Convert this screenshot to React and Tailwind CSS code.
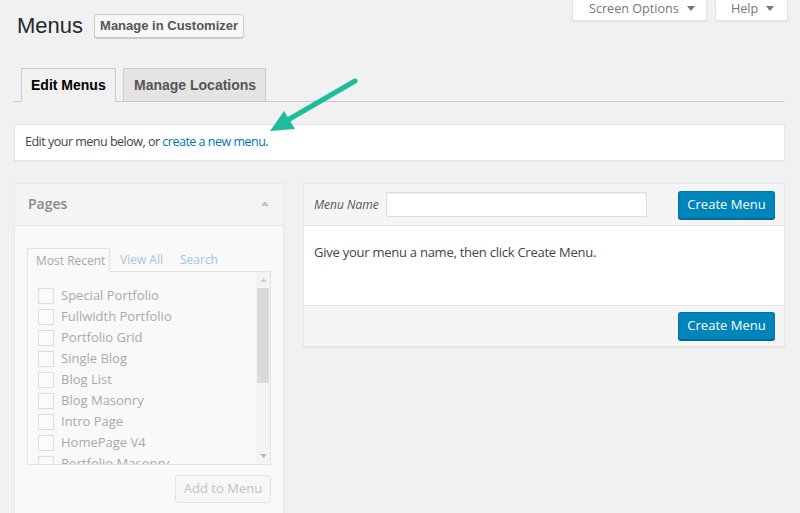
import React from "react";

const pages = [
  "Special Portfolio",
  "Fullwidth Portfolio",
  "Portfolio Grid",
  "Single Blog",
  "Blog List",
  "Blog Masonry",
  "Intro Page",
  "HomePage V4",
  "Portfolio Masonry",
];

const Caret = ({ up = false, className = "" }) => (
  <svg width="8" height="5" viewBox="0 0 8 5" className={className}>
    <polygon points={up ? "0,5 8,5 4,0" : "0,0 8,0 4,5"} fill="currentColor" />
  </svg>
);

const BlueButton = ({ children }) => (
  <button className="h-[28px] w-[97px] rounded-[3px] border border-[#0073aa] border-b-[#006799] bg-[#0085ba] text-[13px] text-white shadow-[0_1px_0_#006799]">
    {children}
  </button>
);

export default function App() {
  return (
    <div className="relative h-[513px] w-[800px] overflow-hidden bg-[#f1f1f1] font-['Open_Sans',sans-serif] text-[13px] text-[#444]">
      {/* Header row */}
      <div className="flex items-start justify-between">
        <div className="flex h-[41px] items-center gap-[11px] pl-[17px] pt-[11px]">
          <h1 className="font-['Liberation_Sans',Arial,sans-serif] text-[22px] leading-[30px] text-[#23282d]">
            Menus
          </h1>
          <button className="h-[24px] w-[150px] rounded-[3px] border border-[#ccc] bg-[#f7f7f7] font-['Liberation_Sans',Arial,sans-serif] text-[13px] font-bold text-[#555] shadow-[0_1px_0_#ccc]">
            Manage in Customizer
          </button>
        </div>
        <div className="flex gap-[8px] pr-[12px]">
          <div className="flex h-[21px] w-[135px] items-start gap-[8px] border border-t-0 border-[#e2e2e2] bg-white pl-[16px] text-[12.6px] leading-[17px] text-[#72777c] shadow-[0_1px_1px_rgba(0,0,0,0.05)]">
            <span>Screen Options</span>
            <Caret className="mt-[6px]" />
          </div>
          <div className="flex h-[21px] w-[73px] items-start gap-[8px] border border-t-0 border-[#e2e2e2] bg-white pl-[15px] text-[12.6px] leading-[17px] text-[#72777c] shadow-[0_1px_1px_rgba(0,0,0,0.05)]">
            <span>Help</span>
            <Caret className="mt-[6px]" />
          </div>
        </div>
      </div>

      {/* Tabs */}
      <div className="ml-[13px] mr-[15px] mt-[27px] flex h-[34px] gap-[7px] border-b border-[#ccc] pl-[8px] font-['Liberation_Sans',Arial,sans-serif] text-[14px] font-bold">
        <div className="-mb-px flex h-[34px] w-[95px] items-center border border-[#ccc] border-b-[#f1f1f1] bg-[#f1f1f1] pl-[9px] text-black">
          Edit Menus
        </div>
        <div className="-mb-px flex h-[34px] w-[143px] items-center border border-[#ccc] bg-[#e4e4e4] pl-[10px] text-[#555]">
          Manage Locations
        </div>
      </div>

      {/* Notice */}
      <div className="ml-[14px] mr-[15px] mt-[22px] flex h-[37px] items-center border border-[#e5e5e5] bg-white px-[10px] shadow-[0_1px_1px_rgba(0,0,0,0.04)]">
        <p className="text-[12.5px] tracking-[-0.5px]">
          Edit your menu below, or{" "}
          <span className="text-[#0073aa]">create a new menu</span>.
        </p>
      </div>

      {/* Columns */}
      <div className="ml-[14px] mr-[15px] mt-[22px] flex items-start gap-[19px]">
        {/* Pages box */}
        <div className="h-[340px] w-[270px] shrink-0 border border-[#e8e8e8] bg-[#f9f9f9]">
          <div className="flex h-[42px] items-center justify-between border-b border-[#e8e8e8] bg-[#f4f4f4] pb-[2px] pl-[13px] pr-[14px]">
            <span className="text-[14px] font-semibold text-[#8a8a8a]">Pages</span>
            <Caret up className="text-[#c4c4c4]" />
          </div>
          <div className="px-[12px] pt-[22px]">
            <div className="flex h-[23px] items-end text-[12px]">
              <div className="-mb-px flex h-[24px] w-[83px] items-center border border-b-0 border-[#e2e2e2] bg-[#f9f9f9] pl-[8px] text-[#a8a8a8]">
                Most Recent
              </div>
              <div className="flex h-[23px] items-center pl-[10px] text-[#9cc6de]">View All</div>
              <div className="flex h-[23px] items-center pl-[17px] text-[#9cc6de]">Search</div>
            </div>
            <div className="flex h-[194px] border border-[#e2e2e2] bg-[#f9f9f9]">
              <ul className="flex-1 overflow-hidden pl-[10px] pt-[13px]">
                {pages.map((p) => (
                  <li key={p} className="flex h-[21px] items-center gap-[7px] text-[#a9a9a9]">
                    <span className="h-4 w-4 shrink-0 border border-[#dcdcdc] bg-[#fbfbfb]" />
                    <span>{p}</span>
                  </li>
                ))}
              </ul>
              <div className="flex w-[14px] flex-col items-center bg-[#f4f4f4]">
                <div className="flex h-[16px] items-center">
                  <svg width="7" height="4" viewBox="0 0 7 4">
                    <polygon points="0,4 7,4 3.5,0" fill="#cfcfcf" />
                  </svg>
                </div>
                <div className="h-[95px] w-[12px] bg-[#dadada]" />
                <div className="flex-1" />
                <div className="flex h-[16px] items-center">
                  <svg width="7" height="4" viewBox="0 0 7 4">
                    <polygon points="0,0 7,0 3.5,4" fill="#b9b9b9" />
                  </svg>
                </div>
              </div>
            </div>
            <div className="mt-[10px] flex justify-end">
              <button className="h-[28px] w-[96px] rounded-[3px] border border-[#e4e4e4] bg-[#f7f7f7] text-[13px] text-[#c2c2c2]">
                Add to Menu
              </button>
            </div>
          </div>
        </div>

        {/* Menu edit panel */}
        <div className="flex-1 border border-[#e5e5e5] bg-white shadow-[0_1px_1px_rgba(0,0,0,0.04)]">
          <div className="flex h-[42px] items-center border-b border-[#e5e5e5] bg-[#f5f5f5] pl-[10px] pr-[9px]">
            <span className="w-[72px] text-[12px] italic text-[#555]">Menu Name</span>
            <div className="h-[25px] w-[261px] border border-[#ddd] bg-white shadow-[inset_0_1px_2px_rgba(0,0,0,0.07)]" />
            <div className="ml-auto">
              <BlueButton>Create Menu</BlueButton>
            </div>
          </div>
          <div className="h-[80px] border-b border-[#e5e5e5] pl-[10px] pt-[17px] tracking-[-0.25px] text-[#444]">
            Give your menu a name, then click Create Menu.
          </div>
          <div className="flex h-[40px] items-center justify-end bg-[#f5f5f5] pr-[9px]">
            <BlueButton>Create Menu</BlueButton>
          </div>
        </div>
      </div>

      {/* Annotation arrow */}
      <svg
        width="800"
        height="513"
        viewBox="0 0 800 513"
        className="pointer-events-none absolute left-0 top-0"
      >
        <line x1="355" y1="81" x2="286" y2="121" stroke="#1dbd9b" strokeWidth="5" strokeLinecap="round" />
        <polygon points="270,131 284,111 295,129" fill="#1dbd9b" />
      </svg>
    </div>
  );
}
